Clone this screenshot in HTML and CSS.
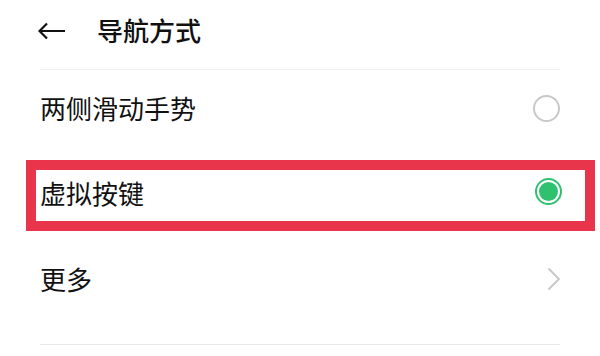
FILE: index.html
```html
<!DOCTYPE html>
<html>
<head>
  <meta charset="utf-8">
  <meta name="viewport" content="width=device-width, initial-scale=1.0">
  <title>导航方式</title>
  <link rel="stylesheet" href="styles.css">
</head>
<body>
  <div class="page">
    <div class="top-bar">
      <svg class="back-icon" width="28" height="18" viewBox="0 0 28 18">
        <path d="M27 9H2M9 1.5L1.5 9L9 16.5" fill="none" stroke="#111" stroke-width="2.2"/>
      </svg>
      <h1 class="page-title">导航方式</h1>
    </div>

    <div class="setting-row first-row">
      <span class="row-label">两侧滑动手势</span>
      <span class="radio"></span>
    </div>

    <div class="highlight-box">
      <div class="setting-row selected-row">
        <span class="row-label">虚拟按键</span>
        <span class="radio checked"></span>
      </div>
    </div>

    <div class="setting-row more-row">
      <span class="row-label">更多</span>
      <svg class="chevron" width="14" height="24" viewBox="0 0 14 24">
        <path d="M1.5 1.5L12 12L1.5 22.5" fill="none" stroke="#c6c6c6" stroke-width="1.8"/>
      </svg>
    </div>

    <div class="bottom-line"></div>
  </div>
</body>
</html>
```

FILE: styles.css
```css
*, *::before, *::after {
  box-sizing: border-box;
  margin: 0;
  padding: 0;
}

body {
  font-family: "Noto Sans CJK SC", "Noto Sans", sans-serif;
  background-color: #fff;
  color: #111;
  width: 600px;
  height: 356px;
  overflow: hidden;
}

.top-bar {
  display: flex;
  align-items: center;
  height: 69px;
  padding: 0 0 10px 38px;
}

.back-icon {
  display: block;
  margin-top: 2px;
}

.page-title {
  margin-left: 31px;
  font-size: 26px;
  font-weight: 500;
  line-height: 1;
  letter-spacing: 0;
}

.setting-row {
  display: flex;
  align-items: center;
  justify-content: space-between;
  padding: 0 40px;
  font-size: 26px;
  line-height: 1;
}

.first-row {
  height: 75px;
  margin: 0 40px;
  padding: 0;
  padding-top: 2px;
  border-top: 1px solid #efefef;
}

.highlight-box {
  margin: 16px 5px 0 26px;
  border: 10px solid #e8354b;
}

.selected-row {
  height: 51px;
  padding: 0 23px 5px 4px;
}

.more-row {
  height: 96px;
}

.radio {
  display: block;
  width: 27px;
  height: 27px;
  border: 2px solid #c8c8c8;
  border-radius: 50%;
}

.radio.checked {
  border: 2.5px solid #2ec26f;
  padding: 2px;
  background-color: #2ec26f;
  background-clip: content-box;
  margin-bottom: 3px;
}

.chevron {
  display: block;
  margin-right: -1px;
}

.bottom-line {
  height: 1px;
  margin: 17px 40px 0;
  background-color: #e8e8e8;
}
```
